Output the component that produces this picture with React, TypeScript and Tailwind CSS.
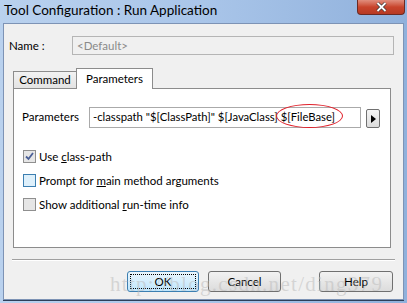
const font = "font-['Lato','Liberation_Sans',sans-serif]";

const Check = ({ checked, hover }: { checked?: boolean; hover?: boolean }) => (
  <span
    className={`flex h-[13px] w-[13px] items-center justify-center border ${
      hover ? "border-[#3c7fb1] bg-[#def0fb]" : "border-[#8f8f8f] bg-[#e6e6e6]"
    }`}
  >
    {checked && (
      <svg width="9" height="9" viewBox="0 0 9 9">
        <path d="M1 4.5 L3.5 7 L8 1" fill="none" stroke="#4a5f97" strokeWidth="1.8" />
      </svg>
    )}
  </span>
);

const Btn = ({ label, focused, w }: { label: string; focused?: boolean; w: string }) => (
  <button
    className={`${w} flex h-[21px] items-center justify-center rounded-[3px] border text-[11.5px] text-black ${
      focused
        ? "border-[#3c7fb1] bg-gradient-to-b from-[#eaf6fd] to-[#bee6fd]"
        : "border-[#707070] bg-gradient-to-b from-[#f2f2f2] to-[#dcdcdc]"
    }`}
  >
    <span className={focused ? "flex h-[15px] w-[66px] items-center justify-center border border-dotted border-black" : ""}>{label}</span>
  </button>
);

export default function App() {
  return (
    <div className={`relative flex h-[303px] w-[407px] flex-col overflow-hidden bg-gradient-to-r from-[#b9d1ee] via-[#a9c5e9] to-[#90b1dc] ${font}`}>
      <div className="flex h-[23px] items-start justify-between">
        <span className="pl-[4px] pt-[2px] text-[13.5px] leading-[16px] text-black">Tool Configuration : Run Application</span>
        <div className="mr-[2px] flex h-[15px] w-[48px] items-center justify-center rounded-b-[4px] border border-t-0 border-[#6b2a24] bg-gradient-to-b from-[#e08d7d] via-[#c8442c] to-[#b73a24]">
          <svg width="11" height="10" viewBox="0 0 11 10">
            <path d="M1.5 1 L9.5 9 M9.5 1 L1.5 9" stroke="#333" strokeWidth="3.2" />
            <path d="M1.5 1 L9.5 9 M9.5 1 L1.5 9" stroke="#fff" strokeWidth="1.8" />
          </svg>
        </div>
      </div>
      <div className="mx-[3px] mb-[3px] flex flex-1 flex-col border border-[#7d93b5] bg-[#f0f0f0] text-[11.5px] shadow-[0_1px_0_#2d3f5a]">
        <div className="flex items-center pl-[5px] pt-[12px] pr-[9px]">
          <span className="w-[63px] text-black">Name :</span>
          <div className="flex h-[19px] flex-1 items-center border border-[#b5b5b5] bg-[#f0f0f0] pl-[4px] text-[#8a8a8a]">&lt;Default&gt;</div>
        </div>

        <div className="ml-[9px] mt-[13px] w-[378px]">
          <div className="flex items-end">
            <div className="-mr-px flex h-[17px] w-[64px] items-center justify-center border border-b-0 border-[#8c8c8c] bg-gradient-to-b from-[#f2f2f2] to-[#e3e3e3] text-black">Command</div>
            <div className="relative z-10 -mb-px flex h-[21px] w-[77px] items-start justify-center border border-b-0 border-[#8c8c8c] bg-white pt-[1px] text-black">Parameters</div>
          </div>
          <div className="relative h-[160px] border border-[#8c8c8c] bg-white px-[8px]">
            <div className="mt-[17px] flex items-center">
              <span className="w-[67px] text-black">Parameters</span>
              <div className="flex h-[21px] w-[272px] items-center whitespace-nowrap border border-[#aaaaaa] bg-white pl-[3px] text-[11.3px] text-black">
                -classpath "$[ClassPath]" $[JavaClass] $[FileBase]
              </div>
              <div className="ml-[5px] mt-[3px] flex h-[19px] w-[14px] items-center justify-center rounded-[2px] border border-[#707070] bg-gradient-to-b from-[#f4f4f4] to-[#dcdcdc]">
                <svg width="5" height="8" viewBox="0 0 5 8"><path d="M0 0 L5 4 L0 8 Z" fill="#000" /></svg>
              </div>
            </div>
            <div className="pointer-events-none absolute left-[262px] top-[15px] h-[24px] w-[67px] rounded-[50%] border border-[#e0202a]" />
            <div className="mt-[22px] flex flex-col gap-[11px] pl-[1px] text-black">
              <label className="flex h-[13px] items-center gap-[3px]"><Check checked /><span>Use <u>c</u>lass-path</span></label>
              <label className="flex h-[13px] items-center gap-[3px]"><Check hover /><span>Prompt for <u>m</u>ain method arguments</span></label>
              <label className="flex h-[13px] items-center gap-[3px]"><Check /><span>Show additional <u>r</u>un-time info</span></label>
            </div>
          </div>
        </div>

        <div className="mx-[8px] mt-[11px] h-[2px] border-t border-b border-t-[#a0a0a0] border-b-white" />

        <div className="mt-[10px] flex pl-[123px]">
          <Btn label="OK" focused w="w-[72px]" />
          <div className="w-[9px]" />
          <Btn label="Cancel" w="w-[73px]" />
          <div className="w-[38px]" />
          <Btn label="Help" w="w-[74px]" />
        </div>
      </div>
      <div className="pointer-events-none absolute left-[110px] top-[269px] font-['Liberation_Serif',serif] text-[21px] tracking-[1.3px] text-[#bdbdbd]/55">
        http://blog.csdn.net/ding379
      </div>
    </div>
  );
}
